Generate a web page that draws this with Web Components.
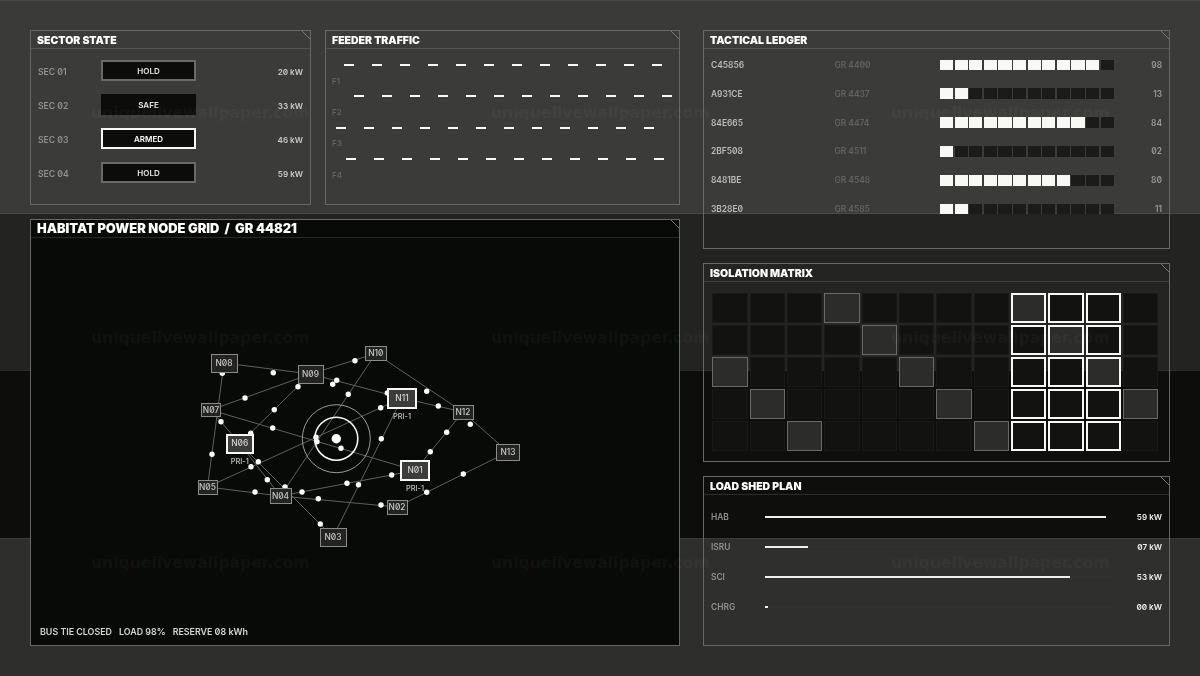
<!DOCTYPE html>
<html lang="en">
<head>
<meta charset="utf-8">
<title>Habitat Power Node Grid</title>
<style>
  html, body { margin: 0; height: 100%; background: #0c0d0b; overflow: hidden; }
  body { font-family: Inter, "Liberation Sans", sans-serif; font-variant-numeric: slashed-zero; }
</style>
</head>
<body>
<hud-deck>
  <hud-panel slot="sector" label="Sector State">
    <sector-row name="SEC 01" state="HOLD" load="20 kW"></sector-row>
    <sector-row name="SEC 02" state="SAFE" load="33 kW" kind="safe"></sector-row>
    <sector-row name="SEC 03" state="ARMED" load="46 kW" kind="armed"></sector-row>
    <sector-row name="SEC 04" state="HOLD" load="59 kW"></sector-row>
  </hud-panel>
  <hud-panel slot="feeder" label="Feeder Traffic">
    <feeder-row name="F1" offset="12"></feeder-row>
    <feeder-row name="F2" offset="22"></feeder-row>
    <feeder-row name="F3" offset="4"></feeder-row>
    <feeder-row name="F4" offset="14"></feeder-row>
  </hud-panel>
  <hud-panel slot="grid" label="Habitat Power Node Grid &nbsp;/&nbsp; GR 44821" large>
    <node-graph></node-graph>
    <status-line>
      <span>BUS TIE CLOSED</span><span>LOAD 98%</span><span>RESERVE 08 kWh</span>
    </status-line>
  </hud-panel>
  <hud-panel slot="ledger" label="Tactical Ledger">
    <ledger-row code="C45856" ref="GR 4400" on="11" value="98"></ledger-row>
    <ledger-row code="A931CE" ref="GR 4437" on="2" value="13"></ledger-row>
    <ledger-row code="84E665" ref="GR 4474" on="10" value="84"></ledger-row>
    <ledger-row code="2BF508" ref="GR 4511" on="1" value="02"></ledger-row>
    <ledger-row code="8481BE" ref="GR 4548" on="9" value="80"></ledger-row>
    <ledger-row code="3B28E0" ref="GR 4585" on="2" value="11"></ledger-row>
  </hud-panel>
  <hud-panel slot="matrix" label="Isolation Matrix">
    <iso-matrix></iso-matrix>
  </hud-panel>
  <hud-panel slot="shed" label="Load Shed Plan">
    <shed-row name="HAB" width="341" value="59 kW"></shed-row>
    <shed-row name="ISRU" width="43" value="07 kW"></shed-row>
    <shed-row name="SCI" width="305" value="53 kW"></shed-row>
    <shed-row name="CHRG" width="3" value="00 kW"></shed-row>
  </hud-panel>
</hud-deck>
<wall-mark></wall-mark>

<script>
// page shell: the four background bands and the two panel columns
class HudDeck extends HTMLElement {
  constructor() {
    super();
    this.attachShadow({ mode: 'open' }).innerHTML = /* html */`
      <style>
        :host {
          display: grid;
          grid-template-columns: 650px 467px;
          column-gap: 23px;
          box-sizing: border-box;
          width: 1200px;
          height: 676px;
          padding: 30px;
          background: linear-gradient(#474846 0 1px, #3a3b39 1px 213px, #4a4b49 213px 214px, #232422 214px 370px,
            #2c2d2b 370px 371px, #0d0e0c 371px 538px, #3b3c3a 538px 539px, #2e2f2d 539px);
        }
        .left {
          display: grid;
          grid-template-columns: 281px 355px;
          grid-template-rows: 175px 427px;
          gap: 14px;
        }
        .right {
          display: grid;
          grid-template-rows: 219px 199.5px 170.5px;
          row-gap: 13.5px;
        }
        ::slotted([slot="grid"]) { grid-column: 1 / -1; }
        /* the reference is soft all over, as a compressed video frame is */
        ::slotted(hud-panel) { filter: blur(.4px); }
      </style>
      <div class="left">
        <slot name="sector"></slot>
        <slot name="feeder"></slot>
        <slot name="grid"></slot>
      </div>
      <div class="right">
        <slot name="ledger"></slot>
        <slot name="matrix"></slot>
        <slot name="shed"></slot>
      </div>
    `;
  }
}

class HudPanel extends HTMLElement {
  constructor() {
    super();
    this.attachShadow({ mode: 'open' }).innerHTML = /* html */`
      <style>
        :host {
          display: flex;
          flex-direction: column;
          position: relative;
          box-sizing: border-box;
          min-height: 0;
          border: 1px solid #666864;
          background: rgba(255, 255, 255, .008);
        }
        :host([large]) { background: #080a07; }
        .head {
          flex: none;
          box-sizing: border-box;
          height: 18px;
          padding: 2px 0 0 6px;
          border-bottom: 1px solid rgba(255, 255, 255, .13);
          color: #fff;
          font: 900 10.5px/15px Inter, "Liberation Sans", sans-serif;
          font-variant-numeric: slashed-zero;
          text-transform: uppercase;
          white-space: nowrap;
        }
        :host([large]) .head { padding-top: 0; font-size: 12.9px; line-height: 17px; }
        .body { flex: 1; display: flex; flex-direction: column; min-height: 0; }
        .notch {
          position: absolute;
          top: 0;
          right: 0;
          width: 8px;
          height: 8px;
          background: linear-gradient(45deg, transparent calc(50% - .6px), #767874 50%, transparent calc(50% + .6px));
        }
      </style>
      <div class="head"></div>
      <div class="body"><slot></slot></div>
      <div class="notch"></div>
    `;
  }

  connectedCallback() {
    this.shadowRoot.querySelector('.head').textContent = this.getAttribute('label');
  }
}

class SectorRow extends HTMLElement {
  constructor() {
    super();
    this.attachShadow({ mode: 'open' }).innerHTML = /* html */`
      <style>
        :host {
          display: grid;
          grid-template-columns: 63px 95px 1fr;
          align-items: start;
          height: 34px;
          padding: 0 7px;
          font: 600 8.6px/25px Inter, "Liberation Sans", sans-serif;
          font-variant-numeric: slashed-zero;
        }
        :host(:first-child) { margin-top: 11px; }
        .name { color: #90918d; }
        .chip {
          box-sizing: border-box;
          height: 21px;
          border: 2px solid #686a66;
          background: #0c0d0b;
          color: #e6e7e3;
          font-size: 8px;
          line-height: 19px;
          text-align: center;
        }
        :host([kind="safe"]) .chip { border-color: #0c0d0b; }
        :host([kind="armed"]) .chip { border-color: #f8f9f5; color: #fff; }
        .load { color: #c9cac6; font-size: 8.1px; text-align: right; }
      </style>
      <span class="name"></span><span class="chip"></span><span class="load"></span>
    `;
  }

  connectedCallback() {
    const root = this.shadowRoot;
    root.querySelector('.name').textContent = this.getAttribute('name');
    root.querySelector('.chip').textContent = this.getAttribute('state');
    root.querySelector('.load').textContent = this.getAttribute('load');
  }
}

class FeederRow extends HTMLElement {
  constructor() {
    super();
    this.attachShadow({ mode: 'open' }).innerHTML = /* html */`
      <style>
        :host {
          display: block;
          height: 31.4px;
          padding-left: 6px;
          font: 600 8px/10px Inter, "Liberation Sans", sans-serif;
          color: #62635f;
        }
        :host(:first-child) { margin-top: 15px; }
        .track { display: flex; gap: 18px; height: 2px; }
        .track i { flex: none; width: 10px; background: #f8f9f5; }
        .name { display: block; margin-top: 9.5px; }
      </style>
      <div class="track"></div>
      <span class="name"></span>
    `;
  }

  connectedCallback() {
    const track = this.shadowRoot.querySelector('.track');
    track.style.paddingLeft = `${this.getAttribute('offset')}px`;
    track.replaceChildren(...Array.from({ length: 12 }, () => document.createElement('i')));
    this.shadowRoot.querySelector('.name').textContent = this.getAttribute('name');
  }
}

class LedgerRow extends HTMLElement {
  constructor() {
    super();
    this.attachShadow({ mode: 'open' }).innerHTML = /* html */`
      <style>
        :host {
          display: grid;
          grid-template-columns: 123.5px 105.5px 174px 1fr;
          align-items: center;
          height: 28.8px;
          padding: 0 7px;
          font: 600 8.4px/12px Inter, "Liberation Sans", sans-serif;
          font-variant-numeric: slashed-zero;
        }
        :host(:first-child) { margin-top: 1.6px; }
        .code { color: #bcbdb9; }
        .ref { color: #62635f; }
        .value { color: #999a96; text-align: right; }
        .cells { display: grid; grid-template-columns: repeat(12, 13.3px); column-gap: 1.3px; }
        .cells i { height: 10.7px; background: #1b1c1a; }
        .cells i.on { background: #f8f9f5; }
      </style>
      <span class="code"></span><span class="ref"></span><div class="cells"></div><span class="value"></span>
    `;
  }

  connectedCallback() {
    const root = this.shadowRoot;
    const on = Number(this.getAttribute('on'));
    root.querySelector('.code').textContent = this.getAttribute('code');
    root.querySelector('.ref').textContent = this.getAttribute('ref');
    root.querySelector('.value').textContent = this.getAttribute('value');
    root.querySelector('.cells').replaceChildren(...Array.from({ length: 12 }, (_, i) => {
      const cell = document.createElement('i');
      if (i < on) cell.className = 'on';
      return cell;
    }));
  }
}

class IsoMatrix extends HTMLElement {
  constructor() {
    super();
    this.attachShadow({ mode: 'open' }).innerHTML = /* html */`
      <style>
        :host {
          display: grid;
          grid-template-columns: repeat(12, 1fr);
          grid-auto-rows: 30px;
          gap: 2px;
          padding: 11px 10.7px 0 8.3px;
        }
        i {
          box-sizing: border-box;
          border: 1px solid rgba(255, 255, 255, .03);
          background: #121311;
        }
        i.lit { background: #2c2d2b; border-color: #686a66; }
        i.sel { border: 2px solid #f8f9f5; }
      </style>
    `;
  }

  connectedCallback() {
    for (let row = 0; row < 5; row++) {
      for (let col = 0; col < 12; col++) {
        const cell = document.createElement('i');
        // lit cells run on diagonals, the selection is the three columns 8 to 10
        if ((col - row + 10) % 5 === 3) cell.classList.add('lit');
        if (col >= 8 && col <= 10) cell.classList.add('sel');
        this.shadowRoot.append(cell);
      }
    }
  }
}

class ShedRow extends HTMLElement {
  constructor() {
    super();
    this.attachShadow({ mode: 'open' }).innerHTML = /* html */`
      <style>
        :host {
          display: grid;
          grid-template-columns: 54px 347px 1fr;
          align-items: center;
          height: 30px;
          padding: 0 7px;
          font: 600 8.4px/12px Inter, "Liberation Sans", sans-serif;
          font-variant-numeric: slashed-zero;
        }
        :host(:first-child) { margin-top: 7.5px; }
        .name { color: #90918d; }
        .value { color: #eeefeb; font-size: 8.1px; text-align: right; }
        .track { height: 2px; background: rgba(255, 255, 255, .012); }
        .fill { height: 2px; background: #eeefeb; }
      </style>
      <span class="name"></span><div class="track"><div class="fill"></div></div><span class="value"></span>
    `;
  }

  connectedCallback() {
    const root = this.shadowRoot;
    root.querySelector('.name').textContent = this.getAttribute('name');
    root.querySelector('.value').textContent = this.getAttribute('value');
    root.querySelector('.fill').style.width = `${this.getAttribute('width')}px`;
  }
}

class StatusLine extends HTMLElement {
  constructor() {
    super();
    this.attachShadow({ mode: 'open' }).innerHTML = /* html */`
      <style>
        :host {
          flex: none;
          display: flex;
          gap: 7px;
          padding: 0 9px 7px;
          color: #d6d7d3;
          font: 600 8.9px/12px Inter, "Liberation Sans", sans-serif;
          font-variant-numeric: slashed-zero;
        }
      </style>
      <slot></slot>
    `;
  }
}

// [label, center x, center y, width, height, primary]; coordinates are those of the page
const NODES = [
  ['N01', 415, 470.5, 30, 21, true], ['N02', 397, 507, 21, 15], ['N03', 333, 537, 27, 19],
  ['N04', 280.5, 496, 22, 16], ['N05', 207.5, 487, 20, 15], ['N06', 239.7, 443.7, 28, 20, true],
  ['N07', 211, 410, 20, 14], ['N08', 224, 363, 27, 19], ['N09', 310.5, 374, 26, 19],
  ['N10', 375.8, 353.5, 22, 15], ['N11', 402, 398, 30, 21, true], ['N12', 463, 412, 21, 15],
  ['N13', 508, 452, 24, 17]
];
const LINKS = [
  ['N08', 'N09'], ['N08', 'N05'], ['N07', 'N09'], ['N07', 'N06'], ['N07', 'N01'], ['N06', 'N09'],
  ['N09', 'N10'], ['N09', 'N11'], ['N10', 'N04'], ['N10', 'N12'], ['N11', 'N12'], ['N11', 'N03'],
  ['N05', 'N11'], ['N01', 'N04'], ['N02', 'N04'], ['N06', 'N04'], ['N06', 'N03'], ['N05', 'N04'],
  ['N12', 'N01'], ['N12', 'N13'], ['N13', 'N02']
];
const DOTS = [
  [273.3, 372.7], [222.3, 373.3], [212, 454.3], [245, 398], [221, 421.7], [272.7, 428], [316, 437.3],
  [298, 386.7], [274.3, 409.7], [250.7, 433.3], [355, 360.7], [336.7, 380.3], [332.7, 384.3],
  [387.3, 393], [348.3, 394.3], [285, 487], [426.7, 391.3], [438.3, 406], [381.3, 438.7], [358.5, 484.7],
  [251, 466.7], [258.3, 461.7], [317, 441.7], [380.7, 407.7], [302, 492], [347, 483.3],
  [391.7, 475], [318.3, 498.7], [381, 505], [267.3, 479.7], [320.3, 524], [255, 492], [446.7, 432.3],
  [430.3, 451.7], [470.3, 424.3], [463.3, 474], [426.7, 492.3], [341, 448.3]
];
const ORIGIN_X = 31;
const ORIGIN_Y = 238;

class NodeGraph extends HTMLElement {
  constructor() {
    super();
    this.attachShadow({ mode: 'open' }).innerHTML = /* html */`
      <style>
        :host { display: block; flex: 1; position: relative; min-height: 0; }
        svg { position: absolute; inset: 0; width: 100%; height: 100%; }
        .node {
          position: absolute;
          box-sizing: border-box;
          border: 1px solid #8a8c88;
          background: #232422;
          color: #c9cac6;
          display: flex;
          align-items: center;
          justify-content: center;
          font: 500 8.4px/1 Inter, "Liberation Sans", sans-serif;
          font-variant-numeric: slashed-zero;
        }
        .node.primary { border: 2px solid #f8f9f5; background: #3c3d3b; color: #d6d7d3; }
        .pri {
          position: absolute;
          transform: translateX(-50%);
          color: #c5c6c2;
          font: 500 7.4px/10px Inter, "Liberation Sans", sans-serif;
        }
      </style>
      <svg xmlns="http://www.w3.org/2000/svg"></svg>
    `;
  }

  connectedCallback() {
    const root = this.shadowRoot;
    const byName = new Map(NODES.map(node => [node[0], node]));
    let shapes = '';
    for (const [from, to] of LINKS) {
      const a = byName.get(from);
      const b = byName.get(to);
      shapes += `<line x1="${a[1] - ORIGIN_X}" y1="${a[2] - ORIGIN_Y}" x2="${b[1] - ORIGIN_X}" y2="${b[2] - ORIGIN_Y}" stroke="#5e605c" stroke-width="1"/>`;
    }
    const hubX = 336.3 - ORIGIN_X;
    const hubY = 438.7 - ORIGIN_Y;
    shapes += `<circle cx="${hubX}" cy="${hubY}" r="34" fill="none" stroke="#9a9c98" stroke-width="1"/>`;
    shapes += `<circle cx="${hubX}" cy="${hubY}" r="21.5" fill="none" stroke="#f8f9f5" stroke-width="1.6"/>`;
    shapes += `<circle cx="${hubX}" cy="${hubY}" r="4.7" fill="#fff"/>`;
    for (const [x, y] of DOTS) {
      shapes += `<circle cx="${x - ORIGIN_X}" cy="${y - ORIGIN_Y}" r="2.7" fill="#fff"/>`;
    }
    root.querySelector('svg').innerHTML = shapes;

    for (const [name, x, y, w, h, primary] of NODES) {
      const node = document.createElement('div');
      node.className = primary ? 'node primary' : 'node';
      node.textContent = name;
      node.style.cssText = `left:${x - w / 2 - ORIGIN_X}px;top:${y - h / 2 - ORIGIN_Y}px;width:${w}px;height:${h}px`;
      root.append(node);
      if (primary) {
        const tag = document.createElement('span');
        tag.className = 'pri';
        tag.textContent = 'PRI-1';
        tag.style.cssText = `left:${x - ORIGIN_X}px;top:${y + h / 2 + 3 - ORIGIN_Y}px`;
        root.append(tag);
      }
    }
  }
}

// faint repeated site mark laid over the whole picture
class WallMark extends HTMLElement {
  constructor() {
    super();
    this.attachShadow({ mode: 'open' }).innerHTML = /* html */`
      <style>
        :host {
          position: absolute;
          inset: 0;
          display: grid;
          grid-template-columns: 400px 400px 1fr;
          grid-template-rows: 225px 225px 1fr;
          box-sizing: border-box;
          width: 1200px;
          height: 676px;
          overflow: hidden;
          padding: 104px 0 0 91px;
          pointer-events: none;
          color: rgba(255, 255, 255, .05);
          font: 700 15.6px/18px "DejaVu Sans", sans-serif;
        }
      </style>
    `;
  }

  connectedCallback() {
    for (let i = 0; i < 9; i++) {
      const mark = document.createElement('span');
      mark.textContent = 'uniquelivewallpaper.com';
      this.shadowRoot.append(mark);
    }
  }
}

customElements.define('hud-deck', HudDeck);
customElements.define('hud-panel', HudPanel);
customElements.define('sector-row', SectorRow);
customElements.define('feeder-row', FeederRow);
customElements.define('ledger-row', LedgerRow);
customElements.define('iso-matrix', IsoMatrix);
customElements.define('shed-row', ShedRow);
customElements.define('status-line', StatusLine);
customElements.define('node-graph', NodeGraph);
customElements.define('wall-mark', WallMark);
</script>
</body>
</html>
